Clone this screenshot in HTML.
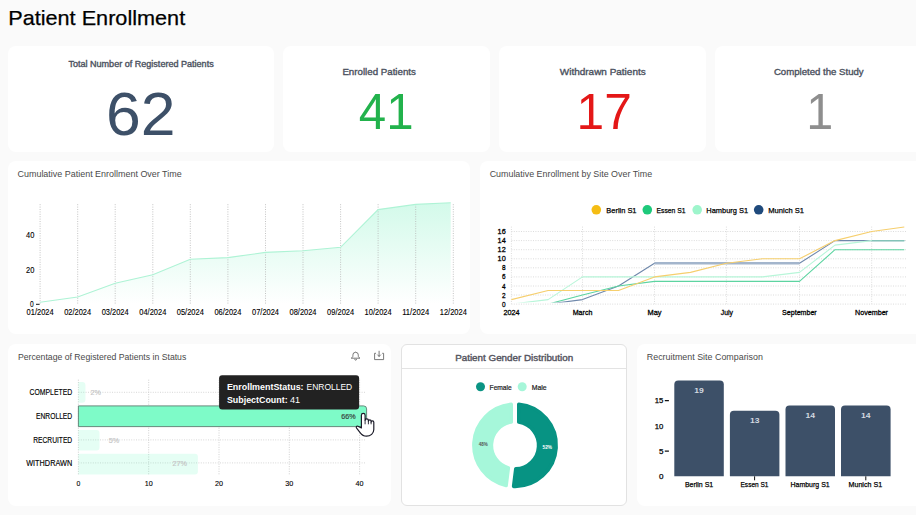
<!DOCTYPE html>
<html><head><meta charset="utf-8"><title>Patient Enrollment</title>
<style>
html,body{margin:0;padding:0;}
body{width:916px;height:515px;overflow:hidden;background:#fafafa;position:relative;font-family:"Liberation Sans", sans-serif;}
.card{position:absolute;background:#fff;border-radius:8px;overflow:hidden;}
.card svg{position:absolute;left:0;top:0;font-family:"Liberation Sans", sans-serif;}
.title{position:absolute;left:0;top:0;font-family:"Liberation Sans", sans-serif;}
</style></head><body>
<svg class="title" width="916" height="40"><text x="8.2" y="24.6" font-size="21" font-weight="normal" fill="#000" textLength="177.0" lengthAdjust="spacingAndGlyphs" stroke="#000" stroke-width="0.25">Patient Enrollment</text></svg>
<div class="card" style="left:8px;top:46px;width:266px;height:106px;"><svg width="266" height="106" viewBox="8 46 266 106"><text x="68.4" y="67.2" font-size="8.4" font-weight="normal" fill="#4c5260" textLength="145.3" lengthAdjust="spacingAndGlyphs" stroke="#4c5260" stroke-width="0.35">Total Number of Registered Patients</text><text x="106.0" y="135.0" font-size="60.5" font-weight="normal" fill="#3d5068" textLength="69.5" lengthAdjust="spacingAndGlyphs">62</text></svg></div><div class="card" style="left:283px;top:46px;width:207px;height:106px;"><svg width="207" height="106" viewBox="283 46 207 106"><text x="342.4" y="74.8" font-size="9" font-weight="normal" fill="#4c5260" textLength="73.5" lengthAdjust="spacingAndGlyphs" stroke="#4c5260" stroke-width="0.35">Enrolled Patients</text><text x="358.8" y="129.1" font-size="49.6" font-weight="normal" fill="#22b24c" textLength="54.8" lengthAdjust="spacingAndGlyphs">41</text></svg></div><div class="card" style="left:499px;top:46px;width:207px;height:106px;"><svg width="207" height="106" viewBox="499 46 207 106"><text x="559.8" y="74.8" font-size="9" font-weight="normal" fill="#4c5260" textLength="85.9" lengthAdjust="spacingAndGlyphs" stroke="#4c5260" stroke-width="0.35">Withdrawn Patients</text><text x="576.5" y="129.1" font-size="49.6" font-weight="normal" fill="#e41717" textLength="55.3" lengthAdjust="spacingAndGlyphs">17</text></svg></div><div class="card" style="left:715px;top:46px;width:215px;height:106px;"><svg width="215" height="106" viewBox="715 46 215 106"><text x="773.9" y="74.8" font-size="9" font-weight="normal" fill="#4c5260" textLength="89.8" lengthAdjust="spacingAndGlyphs" stroke="#4c5260" stroke-width="0.35">Completed the Study</text><text x="806.2" y="129.1" font-size="49.6" font-weight="normal" fill="#8e8e8e" textLength="27.0" lengthAdjust="spacingAndGlyphs">1</text></svg></div><div class="card" style="left:8px;top:161px;width:462px;height:173px;"><svg width="462" height="173" viewBox="8 161 462 173"><text x="17.5" y="176.8" font-size="9" font-weight="normal" fill="#4a4a4a" textLength="164.2" lengthAdjust="spacingAndGlyphs">Cumulative Patient Enrollment Over Time</text><defs><linearGradient id="g1" x1="0" y1="0" x2="0" y2="1"><stop offset="0" stop-color="#d3faea"/><stop offset="1" stop-color="#ffffff"/></linearGradient></defs><polygon points="40.1,304 40.1,302.2 77.7,297.0 115.2,283.3 152.8,274.7 190.3,259.3 227.9,257.6 265.5,252.4 303.0,250.7 340.6,247.3 378.1,209.6 415.7,204.4 450.7,202.7 450.7,304" fill="url(#g1)"/><line x1="40.1" y1="204.2" x2="40.1" y2="304" stroke="#b5b5b5" stroke-width="0.8" stroke-dasharray="1,1.4"/><line x1="77.7" y1="204.2" x2="77.7" y2="304" stroke="#b5b5b5" stroke-width="0.8" stroke-dasharray="1,1.4"/><line x1="115.2" y1="204.2" x2="115.2" y2="304" stroke="#b5b5b5" stroke-width="0.8" stroke-dasharray="1,1.4"/><line x1="152.8" y1="204.2" x2="152.8" y2="304" stroke="#b5b5b5" stroke-width="0.8" stroke-dasharray="1,1.4"/><line x1="190.3" y1="204.2" x2="190.3" y2="304" stroke="#b5b5b5" stroke-width="0.8" stroke-dasharray="1,1.4"/><line x1="227.9" y1="204.2" x2="227.9" y2="304" stroke="#b5b5b5" stroke-width="0.8" stroke-dasharray="1,1.4"/><line x1="265.5" y1="204.2" x2="265.5" y2="304" stroke="#b5b5b5" stroke-width="0.8" stroke-dasharray="1,1.4"/><line x1="303.0" y1="204.2" x2="303.0" y2="304" stroke="#b5b5b5" stroke-width="0.8" stroke-dasharray="1,1.4"/><line x1="340.6" y1="204.2" x2="340.6" y2="304" stroke="#b5b5b5" stroke-width="0.8" stroke-dasharray="1,1.4"/><line x1="378.1" y1="204.2" x2="378.1" y2="304" stroke="#b5b5b5" stroke-width="0.8" stroke-dasharray="1,1.4"/><line x1="415.7" y1="204.2" x2="415.7" y2="304" stroke="#b5b5b5" stroke-width="0.8" stroke-dasharray="1,1.4"/><line x1="453.3" y1="204.2" x2="453.3" y2="304" stroke="#b5b5b5" stroke-width="0.8" stroke-dasharray="1,1.4"/><polyline points="40.1,302.2 77.7,297.0 115.2,283.3 152.8,274.7 190.3,259.3 227.9,257.6 265.5,252.4 303.0,250.7 340.6,247.3 378.1,209.6 415.7,204.4 450.7,202.7" fill="none" stroke="#aef3d5" stroke-width="1.1"/><text x="26.1" y="238.3" font-size="8.3" font-weight="normal" fill="#000" textLength="8.3" lengthAdjust="spacingAndGlyphs" stroke="#000" stroke-width="0.12">40</text><text x="26.1" y="272.6" font-size="8.3" font-weight="normal" fill="#000" textLength="8.3" lengthAdjust="spacingAndGlyphs" stroke="#000" stroke-width="0.12">20</text><text x="30.1" y="306.9" font-size="8.3" font-weight="normal" fill="#000" textLength="3.7" lengthAdjust="spacingAndGlyphs" stroke="#000" stroke-width="0.12">0</text><line x1="36" y1="304.3" x2="39.6" y2="304.3" stroke="#111" stroke-width="1"/><text x="26.6" y="315.2" font-size="8.3" font-weight="normal" fill="#000" textLength="27.0" lengthAdjust="spacingAndGlyphs" stroke="#000" stroke-width="0.12">01/2024</text><text x="64.2" y="315.2" font-size="8.3" font-weight="normal" fill="#000" textLength="27.0" lengthAdjust="spacingAndGlyphs" stroke="#000" stroke-width="0.12">02/2024</text><text x="101.7" y="315.2" font-size="8.3" font-weight="normal" fill="#000" textLength="27.0" lengthAdjust="spacingAndGlyphs" stroke="#000" stroke-width="0.12">03/2024</text><text x="139.3" y="315.2" font-size="8.3" font-weight="normal" fill="#000" textLength="27.0" lengthAdjust="spacingAndGlyphs" stroke="#000" stroke-width="0.12">04/2024</text><text x="176.8" y="315.2" font-size="8.3" font-weight="normal" fill="#000" textLength="27.0" lengthAdjust="spacingAndGlyphs" stroke="#000" stroke-width="0.12">05/2024</text><text x="214.4" y="315.2" font-size="8.3" font-weight="normal" fill="#000" textLength="27.0" lengthAdjust="spacingAndGlyphs" stroke="#000" stroke-width="0.12">06/2024</text><text x="252.0" y="315.2" font-size="8.3" font-weight="normal" fill="#000" textLength="27.0" lengthAdjust="spacingAndGlyphs" stroke="#000" stroke-width="0.12">07/2024</text><text x="289.5" y="315.2" font-size="8.3" font-weight="normal" fill="#000" textLength="27.0" lengthAdjust="spacingAndGlyphs" stroke="#000" stroke-width="0.12">08/2024</text><text x="327.1" y="315.2" font-size="8.3" font-weight="normal" fill="#000" textLength="27.0" lengthAdjust="spacingAndGlyphs" stroke="#000" stroke-width="0.12">09/2024</text><text x="364.6" y="315.2" font-size="8.3" font-weight="normal" fill="#000" textLength="27.0" lengthAdjust="spacingAndGlyphs" stroke="#000" stroke-width="0.12">10/2024</text><text x="402.2" y="315.2" font-size="8.3" font-weight="normal" fill="#000" textLength="27.0" lengthAdjust="spacingAndGlyphs" stroke="#000" stroke-width="0.12">11/2024</text><text x="439.8" y="315.2" font-size="8.3" font-weight="normal" fill="#000" textLength="27.0" lengthAdjust="spacingAndGlyphs" stroke="#000" stroke-width="0.12">12/2024</text></svg></div><div class="card" style="left:480px;top:161px;width:446px;height:173px;"><svg width="446" height="173" viewBox="480 161 446 173"><text x="489.7" y="176.8" font-size="9" font-weight="normal" fill="#4a4a4a" textLength="162.4" lengthAdjust="spacingAndGlyphs">Cumulative Enrollment by Site Over Time</text><circle cx="596.3" cy="209.8" r="4.8" fill="#f5bd14"/><text x="606.3" y="212.6" font-size="8" font-weight="normal" fill="#000" textLength="30.2" lengthAdjust="spacingAndGlyphs" stroke="#000" stroke-width="0.25">Berlin S1</text><circle cx="647.3" cy="209.8" r="4.8" fill="#1ec97b"/><text x="656.5" y="212.6" font-size="8" font-weight="normal" fill="#000" textLength="28.9" lengthAdjust="spacingAndGlyphs" stroke="#000" stroke-width="0.25">Essen S1</text><circle cx="697.2" cy="209.8" r="4.8" fill="#9ef5cc"/><text x="706.3" y="212.6" font-size="8" font-weight="normal" fill="#000" textLength="41.9" lengthAdjust="spacingAndGlyphs" stroke="#000" stroke-width="0.25">Hamburg S1</text><circle cx="758.7" cy="209.8" r="4.8" fill="#1f4a7c"/><text x="768.3" y="212.6" font-size="8" font-weight="normal" fill="#000" textLength="35.7" lengthAdjust="spacingAndGlyphs" stroke="#000" stroke-width="0.25">Munich S1</text><line x1="511.4" y1="304.1" x2="906.3" y2="304.1" stroke="#d3d3d3" stroke-width="0.8" stroke-dasharray="1,1.4"/><text x="502.1" y="306.6" font-size="8" font-weight="normal" fill="#000" textLength="3.6" lengthAdjust="spacingAndGlyphs" stroke="#000" stroke-width="0.3">0</text><line x1="511.4" y1="295.0" x2="906.3" y2="295.0" stroke="#d3d3d3" stroke-width="0.8" stroke-dasharray="1,1.4"/><text x="502.1" y="297.5" font-size="8" font-weight="normal" fill="#000" textLength="3.6" lengthAdjust="spacingAndGlyphs" stroke="#000" stroke-width="0.3">2</text><line x1="511.4" y1="286.0" x2="906.3" y2="286.0" stroke="#d3d3d3" stroke-width="0.8" stroke-dasharray="1,1.4"/><text x="502.1" y="288.5" font-size="8" font-weight="normal" fill="#000" textLength="3.6" lengthAdjust="spacingAndGlyphs" stroke="#000" stroke-width="0.3">4</text><line x1="511.4" y1="276.9" x2="906.3" y2="276.9" stroke="#d3d3d3" stroke-width="0.8" stroke-dasharray="1,1.4"/><text x="502.1" y="279.4" font-size="8" font-weight="normal" fill="#000" textLength="3.6" lengthAdjust="spacingAndGlyphs" stroke="#000" stroke-width="0.3">6</text><line x1="511.4" y1="267.8" x2="906.3" y2="267.8" stroke="#d3d3d3" stroke-width="0.8" stroke-dasharray="1,1.4"/><text x="502.1" y="270.3" font-size="8" font-weight="normal" fill="#000" textLength="3.6" lengthAdjust="spacingAndGlyphs" stroke="#000" stroke-width="0.3">8</text><line x1="511.4" y1="258.8" x2="906.3" y2="258.8" stroke="#d3d3d3" stroke-width="0.8" stroke-dasharray="1,1.4"/><text x="497.6" y="261.2" font-size="8" font-weight="normal" fill="#000" textLength="8.1" lengthAdjust="spacingAndGlyphs" stroke="#000" stroke-width="0.3">10</text><line x1="511.4" y1="249.7" x2="906.3" y2="249.7" stroke="#d3d3d3" stroke-width="0.8" stroke-dasharray="1,1.4"/><text x="497.6" y="252.2" font-size="8" font-weight="normal" fill="#000" textLength="8.1" lengthAdjust="spacingAndGlyphs" stroke="#000" stroke-width="0.3">12</text><line x1="511.4" y1="240.6" x2="906.3" y2="240.6" stroke="#d3d3d3" stroke-width="0.8" stroke-dasharray="1,1.4"/><text x="497.6" y="243.1" font-size="8" font-weight="normal" fill="#000" textLength="8.1" lengthAdjust="spacingAndGlyphs" stroke="#000" stroke-width="0.3">14</text><line x1="511.4" y1="231.5" x2="906.3" y2="231.5" stroke="#d3d3d3" stroke-width="0.8" stroke-dasharray="1,1.4"/><text x="497.6" y="234.0" font-size="8" font-weight="normal" fill="#000" textLength="8.1" lengthAdjust="spacingAndGlyphs" stroke="#000" stroke-width="0.3">16</text><line x1="511.4" y1="226.6" x2="511.4" y2="304.1" stroke="#d3d3d3" stroke-width="0.8" stroke-dasharray="1,1.4"/><line x1="582.5" y1="226.6" x2="582.5" y2="304.1" stroke="#d3d3d3" stroke-width="0.8" stroke-dasharray="1,1.4"/><line x1="654.5" y1="226.6" x2="654.5" y2="304.1" stroke="#d3d3d3" stroke-width="0.8" stroke-dasharray="1,1.4"/><line x1="726.4" y1="226.6" x2="726.4" y2="304.1" stroke="#d3d3d3" stroke-width="0.8" stroke-dasharray="1,1.4"/><line x1="799.5" y1="226.6" x2="799.5" y2="304.1" stroke="#d3d3d3" stroke-width="0.8" stroke-dasharray="1,1.4"/><line x1="871.7" y1="226.6" x2="871.7" y2="304.1" stroke="#d3d3d3" stroke-width="0.8" stroke-dasharray="1,1.4"/><text x="503.4" y="314.6" font-size="8" font-weight="normal" fill="#000" textLength="16.2" lengthAdjust="spacingAndGlyphs" stroke="#000" stroke-width="0.3">2024</text><text x="572.7" y="314.6" font-size="8" font-weight="normal" fill="#000" textLength="19.7" lengthAdjust="spacingAndGlyphs" stroke="#000" stroke-width="0.3">March</text><text x="647.5" y="314.6" font-size="8" font-weight="normal" fill="#000" textLength="14.0" lengthAdjust="spacingAndGlyphs" stroke="#000" stroke-width="0.3">May</text><text x="720.8" y="314.6" font-size="8" font-weight="normal" fill="#000" textLength="12.2" lengthAdjust="spacingAndGlyphs" stroke="#000" stroke-width="0.3">July</text><text x="782.1" y="314.6" font-size="8" font-weight="normal" fill="#000" textLength="34.6" lengthAdjust="spacingAndGlyphs" stroke="#000" stroke-width="0.3">September</text><text x="855.0" y="314.6" font-size="8" font-weight="normal" fill="#000" textLength="33.0" lengthAdjust="spacingAndGlyphs" stroke="#000" stroke-width="0.3">November</text><defs><clipPath id="cp2"><rect x="505" y="200" width="410" height="102.4"/></clipPath></defs><g clip-path="url(#cp2)"><polyline points="511.4,304.1 548.1,304.1 582.5,299.6 618.5,286.0 654.5,263.3 690.5,263.3 726.4,263.3 762.5,263.3 799.5,263.3 835.0,240.6 871.7,240.6 904.3,240.6" fill="none" stroke="#6f88ab" stroke-width="1.1" stroke-linejoin="round"/><polyline points="654.5,263.3 799.5,263.3" fill="none" stroke="#a3b5cc" stroke-width="2.4"/><polyline points="511.4,304.1 548.1,299.6 582.5,276.9 618.5,276.9 654.5,276.9 690.5,276.9 726.4,276.9 762.5,276.9 799.5,272.4 835.0,245.1 871.7,240.6 904.3,240.6" fill="none" stroke="#b8f6d9" stroke-width="1.1" stroke-linejoin="round"/><polyline points="871.7,240.6 904.3,240.6" fill="none" stroke="#84c3b8" stroke-width="1.4"/><polyline points="511.4,304.1 548.1,304.1 582.5,295.0 618.5,286.0 654.5,281.4 690.5,281.4 726.4,281.4 762.5,281.4 799.5,281.4 835.0,249.7 871.7,249.7 904.3,249.7" fill="none" stroke="#5dd4a1" stroke-width="1.1" stroke-linejoin="round"/><polyline points="511.4,299.6 548.1,290.5 582.5,290.5 618.5,290.5 654.5,276.9 690.5,272.4 726.4,263.3 762.5,258.8 799.5,258.8 835.0,240.6 871.7,231.5 904.3,227.0" fill="none" stroke="#f6cf6e" stroke-width="1.1" stroke-linejoin="round"/></g></svg></div><div class="card" style="left:8px;top:344px;width:383px;height:162px;"><svg width="383" height="162" viewBox="8 344 383 162"><text x="17.9" y="360.2" font-size="9" font-weight="normal" fill="#4a4a4a" textLength="168.4" lengthAdjust="spacingAndGlyphs">Percentage of Registered Patients in Status</text><path d="M351.6,358 c0.9,-0.5 1.3,-1.2 1.3,-2.2 v-0.9 a2.7,2.6 0 0 1 5.4,0 v0.9 c0,1 0.4,1.7 1.3,2.2 z M354.7,359.3 a0.95,0.85 0 0 0 1.9,0" fill="none" stroke="#6a6a6a" stroke-width="0.9" stroke-linecap="round" stroke-linejoin="round"/><circle cx="355.6" cy="351.9" r="0.45" fill="#8a8a8a"/><path d="M375.6,353.3 h-1 v6.3 h9 v-6.3 h-1 M379.1,351.2 v5.2 M377.6,354.9 l1.5,1.5 l1.5,-1.5" fill="none" stroke="#6a6a6a" stroke-width="0.9" stroke-linecap="round" stroke-linejoin="round"/><line x1="78.4" y1="379.7" x2="78.4" y2="474.3" stroke="#c4c4c4" stroke-width="0.8" stroke-dasharray="1,1.4"/><line x1="148.7" y1="379.7" x2="148.7" y2="474.3" stroke="#c4c4c4" stroke-width="0.8" stroke-dasharray="1,1.4"/><line x1="219.0" y1="379.7" x2="219.0" y2="474.3" stroke="#c4c4c4" stroke-width="0.8" stroke-dasharray="1,1.4"/><line x1="289.3" y1="379.7" x2="289.3" y2="474.3" stroke="#c4c4c4" stroke-width="0.8" stroke-dasharray="1,1.4"/><line x1="359.6" y1="379.7" x2="359.6" y2="474.3" stroke="#c4c4c4" stroke-width="0.8" stroke-dasharray="1,1.4"/><line x1="78.4" y1="392.3" x2="366" y2="392.3" stroke="#cdcdcd" stroke-width="0.8" stroke-dasharray="1,1.4"/><line x1="78.4" y1="416.1" x2="366" y2="416.1" stroke="#cdcdcd" stroke-width="0.8" stroke-dasharray="1,1.4"/><line x1="78.4" y1="439.9" x2="366" y2="439.9" stroke="#cdcdcd" stroke-width="0.8" stroke-dasharray="1,1.4"/><line x1="78.4" y1="462.9" x2="366" y2="462.9" stroke="#cdcdcd" stroke-width="0.8" stroke-dasharray="1,1.4"/><path d="M78.4,382.1 h4.0 a3,3 0 0 1 3,3 v14.7 a3,3 0 0 1 -3,3 h-4.0 z" fill="#7efbc8" fill-opacity="0.2"/><text x="29.5" y="395.4" font-size="8.5" font-weight="normal" fill="#000" textLength="42.7" lengthAdjust="spacingAndGlyphs" stroke="#000" stroke-width="0.15">COMPLETED</text><path d="M78.4,405.9 h285.2 a3,3 0 0 1 3,3 v14.7 a3,3 0 0 1 -3,3 h-285.2 z" fill="#7efbc8" stroke="#5b7d70" stroke-width="0.9"/><text x="36.0" y="419.2" font-size="8.5" font-weight="normal" fill="#000" textLength="36.2" lengthAdjust="spacingAndGlyphs" stroke="#000" stroke-width="0.15">ENROLLED</text><path d="M78.4,429.9 h18.1 a3,3 0 0 1 3,3 v14.7 a3,3 0 0 1 -3,3 h-18.1 z" fill="#7efbc8" fill-opacity="0.2"/><text x="33.2" y="443.0" font-size="8.5" font-weight="normal" fill="#000" textLength="39.0" lengthAdjust="spacingAndGlyphs" stroke="#000" stroke-width="0.15">RECRUITED</text><path d="M78.4,453.7 h116.5 a3,3 0 0 1 3,3 v14.7 a3,3 0 0 1 -3,3 h-116.5 z" fill="#7efbc8" fill-opacity="0.2"/><text x="26.2" y="466.0" font-size="8.5" font-weight="normal" fill="#000" textLength="46.0" lengthAdjust="spacingAndGlyphs" stroke="#000" stroke-width="0.15">WITHDRAWN</text><text x="341.2" y="418.6" font-size="7.2" font-weight="normal" fill="#3b4a44" textLength="14.4" lengthAdjust="spacingAndGlyphs" stroke="#3b4a44" stroke-width="0.2">66%</text><text x="90.6" y="395.2" font-size="7.2" font-weight="normal" fill="#c4c4c4" textLength="10.4" lengthAdjust="spacingAndGlyphs" stroke="#c4c4c4" stroke-width="0.15">2%</text><text x="108.8" y="442.8" font-size="7.2" font-weight="normal" fill="#c4c4c4" textLength="10.4" lengthAdjust="spacingAndGlyphs" stroke="#c4c4c4" stroke-width="0.15">5%</text><text x="172.5" y="465.8" font-size="7.2" font-weight="normal" fill="#c4c4c4" textLength="14.5" lengthAdjust="spacingAndGlyphs" stroke="#c4c4c4" stroke-width="0.15">27%</text><text x="76.5" y="486.3" font-size="8" font-weight="normal" fill="#000" textLength="3.8" lengthAdjust="spacingAndGlyphs" stroke="#000" stroke-width="0.12">0</text><text x="144.7" y="486.3" font-size="8" font-weight="normal" fill="#000" textLength="8.0" lengthAdjust="spacingAndGlyphs" stroke="#000" stroke-width="0.12">10</text><text x="215.0" y="486.3" font-size="8" font-weight="normal" fill="#000" textLength="8.0" lengthAdjust="spacingAndGlyphs" stroke="#000" stroke-width="0.12">20</text><text x="285.3" y="486.3" font-size="8" font-weight="normal" fill="#000" textLength="8.0" lengthAdjust="spacingAndGlyphs" stroke="#000" stroke-width="0.12">30</text><text x="355.6" y="486.3" font-size="8" font-weight="normal" fill="#000" textLength="8.0" lengthAdjust="spacingAndGlyphs" stroke="#000" stroke-width="0.12">40</text><rect x="219.1" y="375.2" width="140" height="34.4" rx="3" fill="#222"/><text x="226.9" y="389.5" font-size="8.6" font-weight="bold" fill="#fff" textLength="76.7" lengthAdjust="spacingAndGlyphs">EnrollmentStatus:</text><text x="306.5" y="389.5" font-size="8.6" font-weight="normal" fill="#fff" textLength="45.7" lengthAdjust="spacingAndGlyphs">ENROLLED</text><text x="226.9" y="402.5" font-size="8.6" font-weight="bold" fill="#fff" textLength="60.7" lengthAdjust="spacingAndGlyphs">SubjectCount:</text><text x="290.0" y="402.5" font-size="8.6" font-weight="normal" fill="#fff" textLength="10.1" lengthAdjust="spacingAndGlyphs">41</text><path d="M361.4,425.6 V415.2 A1.85,1.85 0 0 1 365.1,415.2 V420.5 A1.65,1.65 0 0 1 368.4,420.5 V421.3 A1.35,1.35 0 0 1 371.1,421.3 V422.2 A1.35,1.35 0 0 1 373.8,422.2 V429.5 C373.8,433.5 370.5,436.2 366.5,436.2 C363.5,436.2 361.6,434.6 360.1,432.6 L356.6,428.2 C355.8,427.1 356.5,425.8 357.9,426.3 L361.4,427.9 Z" fill="#fff" stroke="#1d1d2a" stroke-width="1.2" stroke-linejoin="round"/><path d="M365.1,420.5 V424.3 M368.4,421.3 V424.3 M371.1,422.2 V424.3" fill="none" stroke="#1d1d2a" stroke-width="0.9"/></svg></div><div class="card" style="left:401px;top:344px;width:226px;height:162px;border:1px solid #e2e2e2;border-radius:6px;box-sizing:border-box;"><svg width="224" height="160" viewBox="402 345 224 160"><text x="455.2" y="361.2" font-size="9" font-weight="normal" fill="#555560" textLength="118.0" lengthAdjust="spacingAndGlyphs" stroke="#555560" stroke-width="0.38">Patient Gender Distribution</text><line x1="401" y1="368.5" x2="627" y2="368.5" stroke="#e3e3e3" stroke-width="1"/><circle cx="480.5" cy="386.7" r="4.5" fill="#0b9484"/><text x="489.6" y="389.5" font-size="7" font-weight="normal" fill="#222" textLength="22.1" lengthAdjust="spacingAndGlyphs" stroke="#222" stroke-width="0.2">Female</text><circle cx="522.2" cy="386.7" r="4.5" fill="#a6f6d9"/><text x="531.8" y="389.5" font-size="7" font-weight="normal" fill="#222" textLength="14.9" lengthAdjust="spacingAndGlyphs" stroke="#222" stroke-width="0.2">Male</text><path d="M518.74,404.32 A41.15,41.15 0 0 1 513.58,486.43 L515.79,468.84 A23.55,23.55 0 0 0 518.73,422.05 Z" fill="#079383" stroke="#079383" stroke-width="3.5" stroke-linejoin="round"/><path d="M506.15,485.49 A41.15,41.15 0 0 1 511.26,404.32 L511.27,422.05 A23.55,23.55 0 0 0 508.38,467.90 Z" fill="#a6f7da" stroke="#a6f7da" stroke-width="3.5" stroke-linejoin="round"/><text x="478.7" y="446.2" font-size="5.5" font-weight="bold" fill="#555" textLength="9.0" lengthAdjust="spacingAndGlyphs">48%</text><text x="542.6" y="449.2" font-size="5.5" font-weight="bold" fill="#fff" textLength="9.5" lengthAdjust="spacingAndGlyphs">52%</text></svg></div><div class="card" style="left:637px;top:344px;width:300px;height:162px;"><svg width="300" height="162" viewBox="637 344 300 162"><text x="646.8" y="360.2" font-size="9" font-weight="normal" fill="#4a4a4a" textLength="116.1" lengthAdjust="spacingAndGlyphs">Recruitment Site Comparison</text><path d="M674.3,476.3 V384.4 a4,4 0 0 1 4,-4 h41.5 a4,4 0 0 1 4,4 V476.3 z" fill="#3d5068"/><text x="694.3" y="393.0" font-size="8" font-weight="bold" fill="#d3d9e0" textLength="9.5" lengthAdjust="spacingAndGlyphs">19</text><text x="684.9" y="487.2" font-size="8" font-weight="normal" fill="#000" textLength="28.3" lengthAdjust="spacingAndGlyphs" stroke="#000" stroke-width="0.25">Berlin S1</text><path d="M729.9,476.3 V414.7 a4,4 0 0 1 4,-4 h41.5 a4,4 0 0 1 4,4 V476.3 z" fill="#3d5068"/><text x="749.9" y="423.3" font-size="8" font-weight="bold" fill="#d3d9e0" textLength="9.5" lengthAdjust="spacingAndGlyphs">13</text><text x="740.5" y="487.2" font-size="8" font-weight="normal" fill="#000" textLength="28.0" lengthAdjust="spacingAndGlyphs" stroke="#000" stroke-width="0.25">Essen S1</text><path d="M785.5,476.3 V409.6 a4,4 0 0 1 4,-4 h41.5 a4,4 0 0 1 4,4 V476.3 z" fill="#3d5068"/><text x="805.5" y="418.2" font-size="8" font-weight="bold" fill="#d3d9e0" textLength="9.5" lengthAdjust="spacingAndGlyphs">14</text><text x="790.5" y="487.2" font-size="8" font-weight="normal" fill="#000" textLength="39.2" lengthAdjust="spacingAndGlyphs" stroke="#000" stroke-width="0.25">Hamburg S1</text><path d="M841,476.3 V409.6 a4,4 0 0 1 4,-4 h41.6 a4,4 0 0 1 4,4 V476.3 z" fill="#3d5068"/><text x="861.0" y="418.2" font-size="8" font-weight="bold" fill="#d3d9e0" textLength="9.5" lengthAdjust="spacingAndGlyphs">14</text><text x="848.5" y="487.2" font-size="8" font-weight="normal" fill="#000" textLength="33.6" lengthAdjust="spacingAndGlyphs" stroke="#000" stroke-width="0.25">Munich S1</text><text x="654.8" y="403.4" font-size="8" font-weight="normal" fill="#000" textLength="8.6" lengthAdjust="spacingAndGlyphs" stroke="#000" stroke-width="0.25">15</text><text x="654.8" y="428.7" font-size="8" font-weight="normal" fill="#000" textLength="8.6" lengthAdjust="spacingAndGlyphs" stroke="#000" stroke-width="0.25">10</text><text x="658.9" y="453.9" font-size="8" font-weight="normal" fill="#000" textLength="4.5" lengthAdjust="spacingAndGlyphs" stroke="#000" stroke-width="0.25">5</text><text x="658.9" y="479.2" font-size="8" font-weight="normal" fill="#000" textLength="4.5" lengthAdjust="spacingAndGlyphs" stroke="#000" stroke-width="0.25">0</text><line x1="664.8" y1="400.6" x2="668.9" y2="400.6" stroke="#111" stroke-width="1.1"/><line x1="664.8" y1="451.1" x2="668.9" y2="451.1" stroke="#111" stroke-width="1.1"/><line x1="754.6" y1="476.3" x2="754.6" y2="480.3" stroke="#111" stroke-width="1"/><line x1="865.8" y1="476.3" x2="865.8" y2="480.3" stroke="#111" stroke-width="1"/></svg></div>
</body></html>
